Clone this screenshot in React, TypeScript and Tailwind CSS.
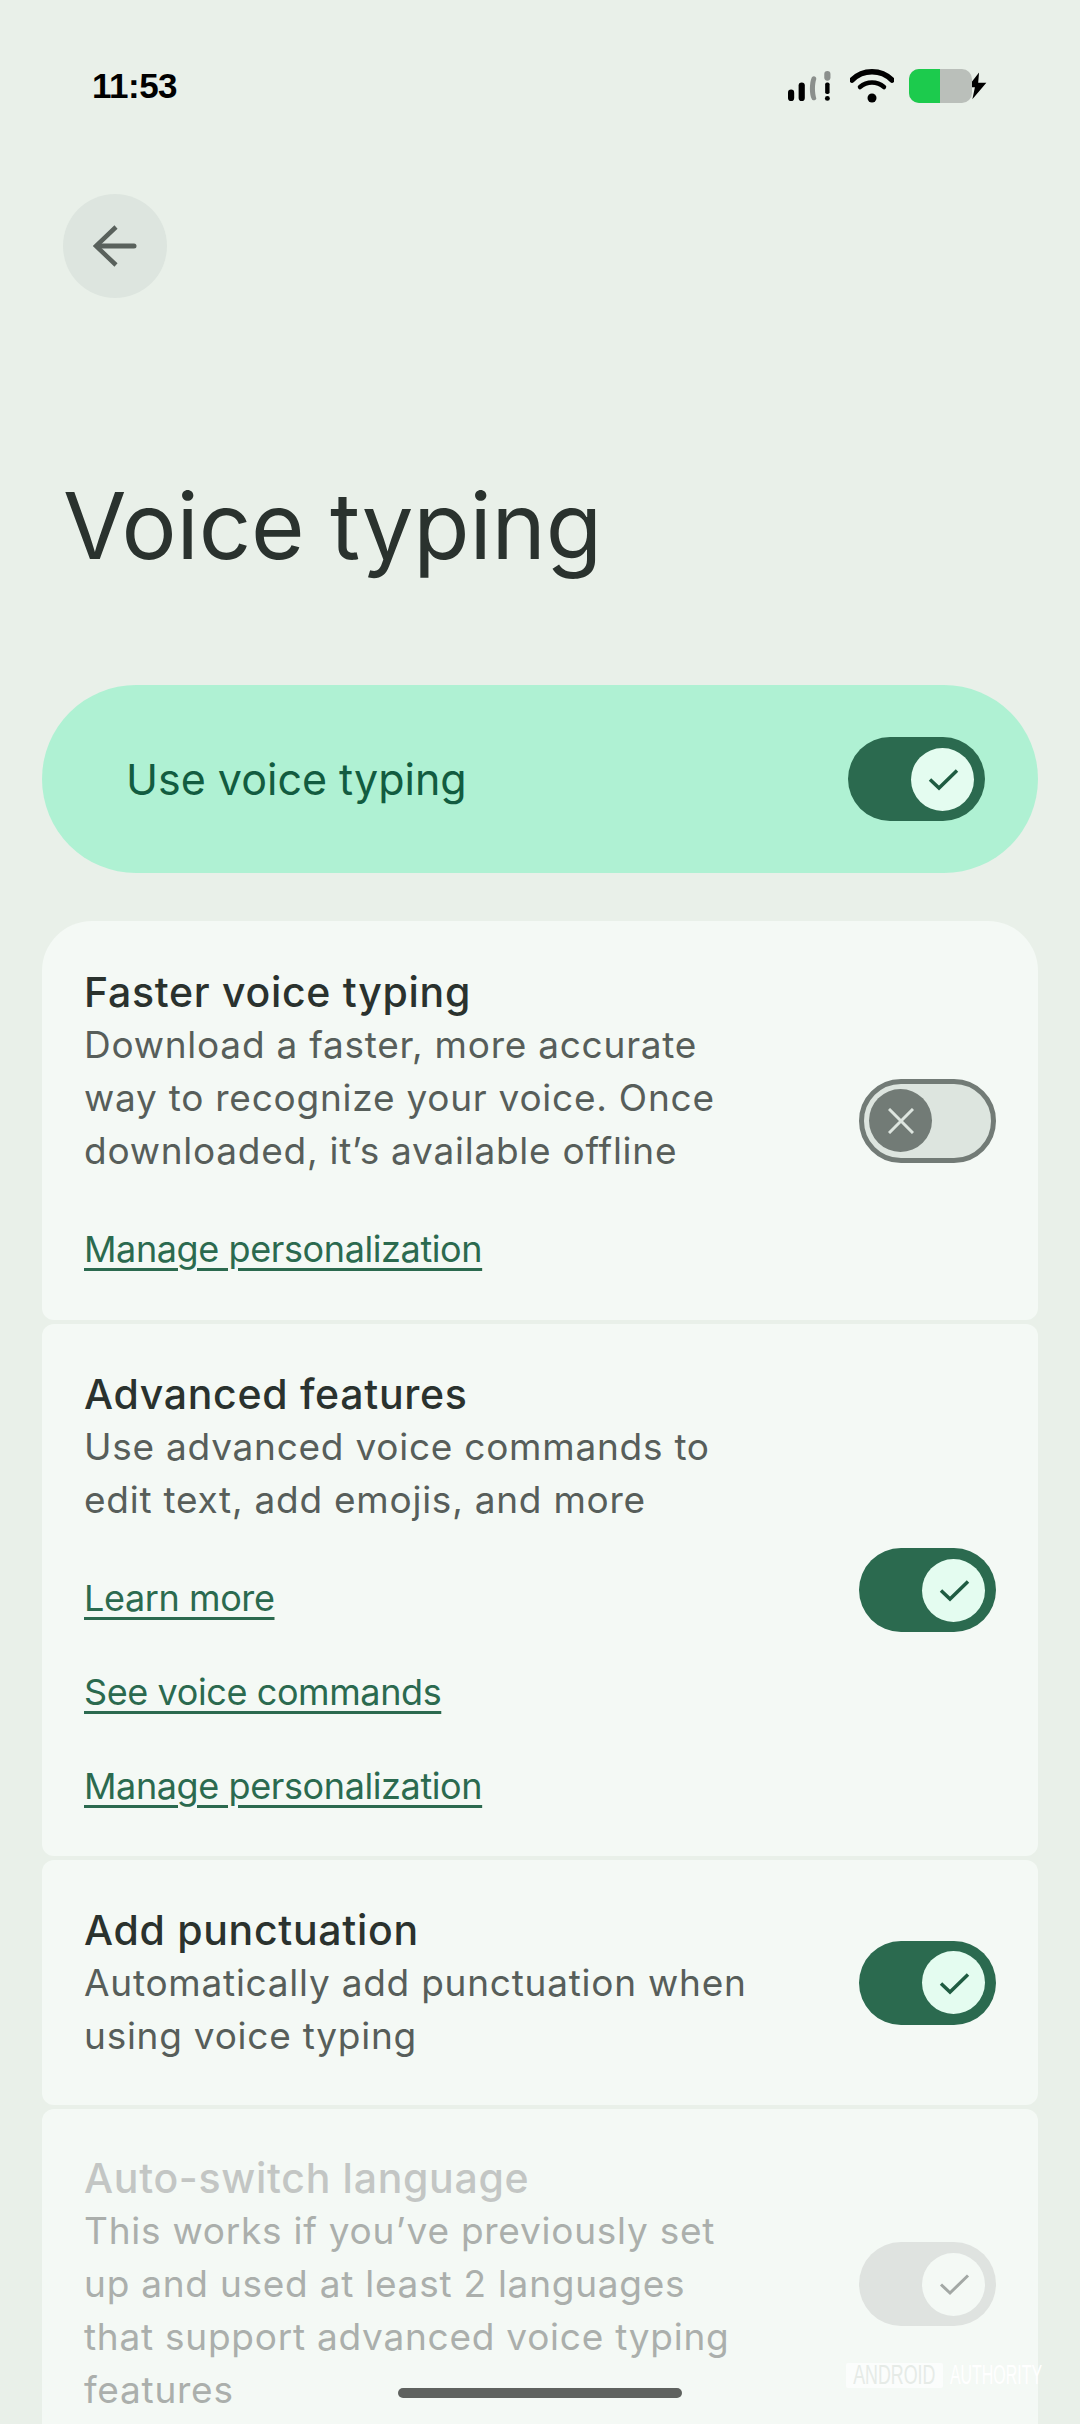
import type { ReactNode } from 'react';

function CheckMark({ color, width = 3.5 }: { color: string; width?: number }) {
  return (
    <svg width="34" height="34" viewBox="0 0 34 34">
      <path d="M4 17.5l9 8.5L31 8.5" fill="none" stroke={color} strokeWidth={width} />
    </svg>
  );
}

interface ToggleProps {
  on: boolean;
  disabled?: boolean;
}

function Toggle({ on, disabled }: ToggleProps) {
  if (disabled) {
    return (
      <div className="w-[137px] h-[84px] shrink-0 rounded-full bg-[#dfe3e0] flex items-center justify-end pr-[11px]">
        <div className="w-[63px] h-[63px] rounded-full bg-[#f4f9f5] flex items-center justify-center">
          <CheckMark color="#a3a8a5" width={3} />
        </div>
      </div>
    );
  }
  if (on) {
    return (
      <div className="w-[137px] h-[84px] shrink-0 rounded-full bg-[#2b6a4f] flex items-center justify-end pr-[11px]">
        <div className="w-[63px] h-[63px] rounded-full bg-[#e4fcf0] flex items-center justify-center">
          <CheckMark color="#1f5c42" />
        </div>
      </div>
    );
  }
  return (
    <div className="w-[137px] h-[84px] shrink-0 rounded-full bg-[#dde5df] border-[5px] border-[#727b76] flex items-center pl-[5px]">
      <div className="w-[63px] h-[63px] rounded-full bg-[#727b76] flex items-center justify-center">
        <svg width="26" height="26" viewBox="0 0 26 26">
          <path d="M1 1l24 24M25 1L1 25" fill="none" stroke="#dde5df" strokeWidth="3" />
        </svg>
      </div>
    </div>
  );
}

function StatusIcons() {
  return (
    <div className="flex items-center">
      <svg width="46" height="34" viewBox="0 0 52 34">
        <rect x="0" y="21" width="7" height="13" rx="3.5" fill="#000" />
        <rect x="12" y="13" width="7" height="21" rx="3.5" fill="#000" />
        <path d="M27 32c-3-5-3-19 0-25 2-2 5-1 5 2-2 6-2 15 0 22 0 2-4 3-5 1z" fill="#8b8f8c" />
        <rect x="41" y="0" width="7" height="11" rx="3.5" fill="#8b8f8c" />
        <rect x="42" y="13" width="5" height="13" rx="2" fill="#000" />
        <circle cx="44.5" cy="31" r="2.8" fill="#000" />
      </svg>
      <svg width="44" height="34" viewBox="0 0 44 34" className="ml-[16px]">
        <path d="M2 11C13 0 31 0 42 11" fill="none" stroke="#000" strokeWidth="5.5" strokeLinecap="round" />
        <path d="M10 18c7-6 17-6 24 0" fill="none" stroke="#000" strokeWidth="4.5" strokeLinecap="round" />
        <circle cx="22" cy="29" r="4.5" fill="#000" />
      </svg>
      <div className="relative ml-[15px] w-[63px] h-[34px] rounded-[10px] overflow-hidden bg-[#babfba] flex">
        <div className="w-[31px] h-full bg-[#1ccb4d]" />
      </div>
      <svg width="24" height="34" viewBox="0 0 24 34" className="-ml-[7px]">
        <path d="M15 1L1 19h8l-3 14L23 13h-9z" fill="#000" stroke="#e9f0e9" strokeWidth="1.5" />
      </svg>
    </div>
  );
}

interface SettingCardProps {
  title: string;
  description: string[];
  links?: string[];
  toggle: ReactNode;
  disabled?: boolean;
  className: string;
}

function SettingCard({ title, description, links = [], toggle, disabled, className }: SettingCardProps) {
  return (
    <div className={`bg-[#f4f9f5] flex items-center justify-between pl-[42px] pr-[42px] ${className}`}>
      <div className="flex flex-col">
        <div className={`text-[41px] leading-[52px] tracking-[0.7px] font-medium ${disabled ? 'text-[#c3c6c4]' : 'text-[#2a322e]'}`}>
          {title}
        </div>
        <div className={`text-[37px] leading-[53px] tracking-[0.75px] ${disabled ? 'text-[#abafac]' : 'text-[#575e5a]'}`}>
          {description.map((line) => (
            <div key={line}>{line}</div>
          ))}
        </div>
        {links.length > 0 && (
          <div className="flex flex-col gap-[41px] mt-[46px]">
            {links.map((link, index) => (
              <div key={index} className="text-[36px] leading-[53px] tracking-[-0.4px] text-[#2b6a4f] underline underline-offset-[6px]">
                {link}
              </div>
            ))}
          </div>
        )}
      </div>
      {toggle}
    </div>
  );
}

export default function App() {
  return (
    <div className="relative w-[1080px] h-[2424px] overflow-hidden bg-[#e9f0e9] font-['Inter',sans-serif]">
      {/* Status bar */}
      <div className="flex items-center justify-between pt-[69px] pl-[92px] pr-[91px] h-[103px]">
        <span className="text-[35px] leading-[34px] font-bold tracking-[-0.5px] text-black font-['Liberation_Sans',sans-serif]">11:53</span>
        <StatusIcons />
      </div>

      {/* Back button */}
      <div className="mt-[91px] ml-[63px] w-[104px] h-[104px] rounded-full bg-[#dde5df] flex items-center justify-center">
        <svg width="44" height="42" viewBox="0 0 44 42">
          <path d="M23 2L3 21l20 19" fill="none" stroke="#59615c" strokeWidth="4.5" />
          <path d="M5 21h36" fill="none" stroke="#59615c" strokeWidth="5" strokeLinecap="round" />
        </svg>
      </div>

      <h1 className="mt-[168px] ml-[63px] text-[92px] leading-[120px] tracking-[-0.2px] text-[#2a322e]">Voice typing</h1>

      {/* Main switch */}
      <div className="mt-[99px] mx-[42px] h-[188px] rounded-[94px] bg-[#aff1d3] flex items-center justify-between pl-[84px] pr-[53px]">
        <span className="text-[43px] text-[#125c40]">Use voice typing</span>
        <Toggle on />
      </div>

      {/* Settings list */}
      <div className="mt-[48px] mx-[42px] flex flex-col gap-[4px]">
        <SettingCard
          className="h-[399px] rounded-t-[50px] rounded-b-[12px]"
          title="Faster voice typing"
          description={['Download a faster, more accurate', 'way to recognize your voice. Once', 'downloaded, it’s available offline']}
          links={['Manage personalization']}
          toggle={<Toggle on={false} />}
        />
        <SettingCard
          className="h-[532px] rounded-[12px]"
          title="Advanced features"
          description={['Use advanced voice commands to', 'edit text, add emojis, and more']}
          links={['Learn more', 'See voice commands', 'Manage personalization']}
          toggle={<Toggle on />}
        />
        <SettingCard
          className="h-[245px] rounded-[12px]"
          title="Add punctuation"
          description={['Automatically add punctuation when', 'using voice typing']}
          toggle={<Toggle on />}
        />
        <SettingCard
          className="h-[350px] rounded-[12px]"
          disabled
          title="Auto-switch language"
          description={['This works if you’ve previously set', 'up and used at least 2 languages', 'that support advanced voice typing', 'features']}
          toggle={<Toggle on disabled />}
        />
      </div>

      {/* Home indicator */}
      <div className="absolute left-[398px] top-[2388px] w-[284px] h-[10px] rounded-full bg-[#5f625f]" />

      {/* Watermark */}
      <div className="absolute left-[846px] top-[2363px] flex items-center text-[27px] leading-[25px] font-['Liberation_Sans',sans-serif]">
        <div className="w-[97px] h-[25px] rounded-[2px] bg-[#fbfdfc] text-[#e6ebe7] flex justify-center">
          <span className="shrink-0 scale-x-[0.66]">ANDROID</span>
        </div>
        <div className="ml-[7px] w-[92px] h-[25px] text-white flex justify-center">
          <span className="shrink-0 scale-x-[0.59]">AUTHORITY</span>
        </div>
      </div>
    </div>
  );
}
